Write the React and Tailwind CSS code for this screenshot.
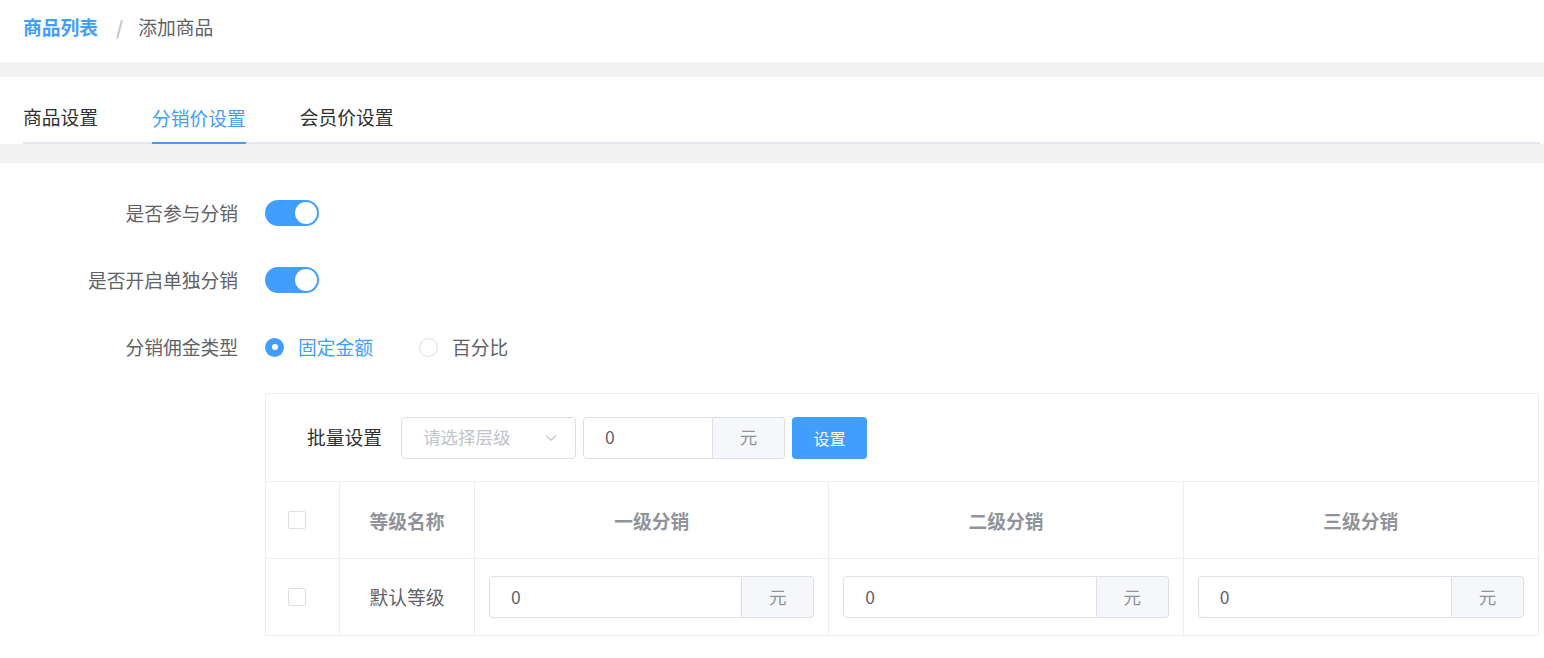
import { ChevronDown } from 'lucide-react';

const font = "font-['Noto_Sans_CJK_SC','Noto_Sans',sans-serif]";

const Switch = () => (
  <div className="w-[54px] h-[26px] rounded-full bg-[#409eff] relative">
    <span className="absolute right-[2px] top-[2px] w-[22px] h-[22px] rounded-full bg-white" />
  </div>
);

const Radio = ({ checked, label }) => (
  <label className="flex items-center">
    {checked ? (
      <span className="w-[19px] h-[19px] rounded-full bg-[#409eff] flex items-center justify-center">
        <span className="w-[6px] h-[6px] rounded-full bg-white" />
      </span>
    ) : (
      <span className="w-[19px] h-[19px] rounded-full border border-[#dcdfe6] bg-white" />
    )}
    <span className={`ml-[14px] text-[18.75px] ${checked ? 'text-[#409eff]' : 'text-[#606266]'}`}>{label}</span>
  </label>
);

const Checkbox = () => (
  <span className="block w-[18px] h-[18px] rounded-[2px] border border-[#dcdfe6] bg-white" />
);

const YuanInput = ({ className = '' }) => (
  <div className={`flex h-[42px] ${className}`}>
    <div className="flex-1 flex items-center pl-[21px] border border-[#dcdfe6] rounded-l-[4px] text-[17.5px] text-[#606266] bg-white">0</div>
    <div className="w-[72px] flex items-center justify-center border border-l-0 border-[#dcdfe6] rounded-r-[4px] bg-[#f5f7fa] text-[17.5px] text-[#909399]">元</div>
  </div>
);

const FormItem = ({ label, children }) => (
  <div className="flex items-center h-[40px] mb-[27px]">
    <div className="w-[238px] text-right text-[18.75px] text-[#606266] shrink-0">{label}</div>
    <div className="ml-[27px] flex items-center">{children}</div>
  </div>
);

const levels = ['一级分销', '二级分销', '三级分销'];

export default function App() {
  return (
    <div className={`min-h-screen bg-white ${font}`}>
      {/* 面包屑 */}
      <div className="h-[62px] flex items-center px-[23px] pb-[8px] text-[18.75px]">
        <span className="font-bold text-[#409eff]">商品列表</span>
        <span className="ml-[18px] mr-[15px] font-bold text-[#c0c4cc]">/</span>
        <span className="text-[#606266]">添加商品</span>
      </div>
      <div className="h-[15px] bg-[#f2f2f2]" />

      {/* 标签页 */}
      <div className="pt-[15px] pl-[23px] pr-[4px]">
        <div className="flex h-[52px] border-b-2 border-[#e4e7ed] text-[18.75px]">
          <div className="h-[50px] flex items-center text-[#303133]">商品设置</div>
          <div className="h-[52px] ml-[54px] flex items-center text-[#409eff] border-b-2 border-[#409eff] -mb-[2px]">
            <span className="-mb-[2px]">分销价设置</span>
          </div>
          <div className="h-[50px] ml-[54px] flex items-center text-[#303133]">会员价设置</div>
        </div>
      </div>
      <div className="h-[19px] bg-[#f2f2f2]" />

      {/* 表单 */}
      <div className="pt-[30px] pr-[5px]">
        <FormItem label="是否参与分销"><Switch /></FormItem>
        <FormItem label="是否开启单独分销"><Switch /></FormItem>
        <FormItem label="分销佣金类型">
          <Radio checked label="固定金额" />
          <div className="ml-[46px]"><Radio label="百分比" /></div>
        </FormItem>

        <div className="ml-[265px] -mt-[1px] border border-[#ebeef5]">
          {/* 批量设置 */}
          <div className="h-[88px] flex items-center pl-[41px] border-b border-[#ebeef5]">
            <span className="text-[18.75px] text-[#303133]">批量设置</span>
            <div className="ml-[19px] w-[175px] h-[42px] flex items-center justify-between pl-[21px] pr-[15px] border border-[#dcdfe6] rounded-[4px]">
              <span className="text-[17.5px] text-[#c0c4cc]">请选择层级</span>
              <ChevronDown size={18} strokeWidth={1.5} className="text-[#c0c4cc]" />
            </div>
            <YuanInput className="ml-[7px] w-[202px]" />
            <button className="ml-[7px] w-[75px] h-[42px] rounded-[4px] bg-[#409eff] text-white text-[16px]">设置</button>
          </div>

          {/* 表格 */}
          <div className="grid grid-cols-[74px_135px_1fr_1fr_1fr]">
            <div className="h-[77px] flex items-center pl-[22px] border-r border-b border-[#ebeef5]"><Checkbox /></div>
            <div className="h-[77px] flex items-center justify-center pt-[3px] border-r border-b border-[#ebeef5] text-[18.75px] font-bold text-[#909399]">等级名称</div>
            {levels.map((l, i) => (
              <div key={l} className={`h-[77px] flex items-center justify-center pt-[3px] border-b border-[#ebeef5] text-[18.75px] font-bold text-[#909399] ${i < 2 ? 'border-r' : ''}`}>{l}</div>
            ))}

            <div className="h-[76px] flex items-center pl-[22px] border-r border-[#ebeef5]"><Checkbox /></div>
            <div className="h-[76px] flex items-center justify-center border-r border-[#ebeef5] text-[18.75px] text-[#606266]">默认等级</div>
            {levels.map((l, i) => (
              <div key={l} className={`h-[76px] flex items-center px-[14px] border-[#ebeef5] ${i < 2 ? 'border-r' : ''}`}>
                <YuanInput className="w-full" />
              </div>
            ))}
          </div>
        </div>
      </div>
    </div>
  );
}
